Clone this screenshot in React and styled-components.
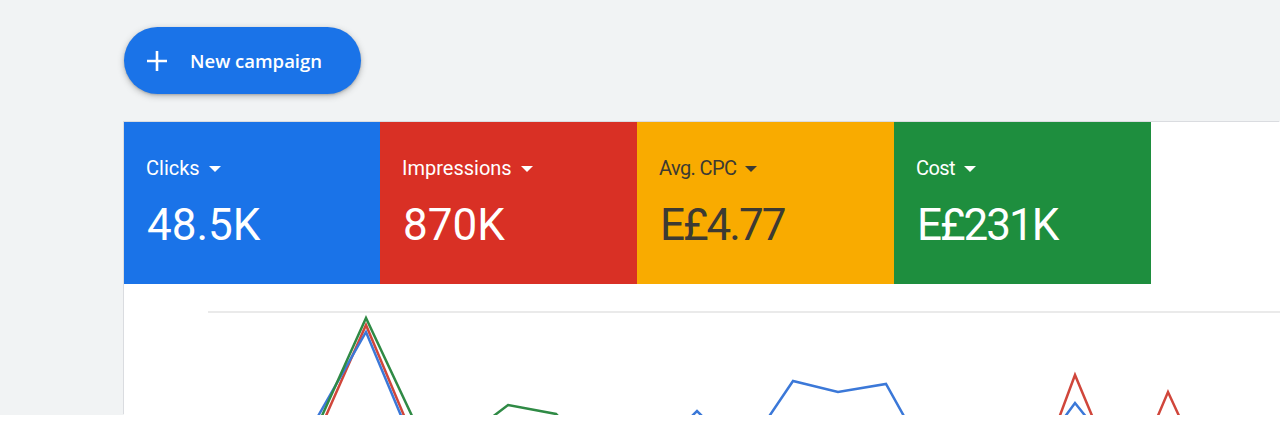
import React from "react";
import styled, { createGlobalStyle } from "styled-components";

const GlobalStyle = createGlobalStyle`
    body {
        margin: 0;
        background: #ffffff;
        font-family: Roboto, "Liberation Sans", Arial, sans-serif;
    }
`;

const Page = styled.div`
    height: 415px;
    overflow: hidden;
    background: #f1f3f4;
    padding: 27px 0 0 124px;
    box-sizing: border-box;
`;

const CampaignButton = styled.button`
    display: flex;
    align-items: center;
    gap: 22px;
    width: 237px;
    height: 67px;
    padding: 0 0 0 22px;
    border: none;
    border-radius: 34px;
    background: #1a73e8;
    color: #ffffff;
    font-family: "Open Sans", Roboto, sans-serif;
    font-size: 18.5px;
    font-weight: 600;
    box-shadow: 0 2px 6px rgba(60, 64, 67, 0.35), 0 1px 2px rgba(60, 64, 67, 0.2);
    cursor: pointer;
`;

const Panel = styled.div`
    margin-top: 28px;
    background: #ffffff;
    box-shadow: -1px -1px 0 #dadce0;
`;

const Tiles = styled.div`
    display: flex;
    height: 162px;
`;

const Tile = styled.div`
    width: ${(p) => p.$w}px;
    background: ${(p) => p.$bg};
    color: ${(p) => p.$fg};
    padding: 34px 0 0 22px;
    box-sizing: border-box;
`;

const Label = styled.div`
    display: flex;
    align-items: center;
    gap: 9px;
    font-size: 20px;
    letter-spacing: ${(p) => (p.$tight ? "-0.6px" : "0")};
    height: 24px;
`;

const Caret = styled.span`
    width: 0;
    height: 0;
    border-left: 6px solid transparent;
    border-right: 6px solid transparent;
    border-top: 6px solid currentColor;
    margin-top: 2px;
`;

const Value = styled.div`
    margin-top: 19px;
    padding-left: 1px;
    font-size: 44px;
    line-height: 52px;
    letter-spacing: ${(p) => (p.$tight ? "-2px" : "0")};
`;

const Chart = styled.svg`
    display: block;
`;

const metrics = [
    { label: "Clicks", value: "48.5K", bg: "#1a73e8", fg: "#ffffff", w: 256 },
    { label: "Impressions", value: "870K", bg: "#d93025", fg: "#ffffff", w: 257 },
    { label: "Avg. CPC", value: "E£4.77", bg: "#f9ab00", fg: "#3c3a33", w: 257, tight: true },
    { label: "Cost", value: "E£231K", bg: "#1e8e3e", fg: "#ffffff", w: 257, tight: true },
];

const blue = "#3b78d8";
const red = "#d0463b";
const green = "#2f8a45";

export default function App() {
    return (
        <>
            <GlobalStyle />
            <Page>
                <CampaignButton>
                    <svg width="22" height="22" viewBox="0 0 22 22">
                        <path d="M11 1v20M1 11h20" stroke="#fff" strokeWidth="2.6" />
                    </svg>
                    New campaign
                </CampaignButton>
                <Panel>
                    <Tiles>
                        {metrics.map((m) => (
                            <Tile key={m.label} $bg={m.bg} $fg={m.fg} $w={m.w}>
                                <Label $tight={m.tight}>
                                    {m.label}
                                    <Caret />
                                </Label>
                                <Value $tight={m.tight}>{m.value}</Value>
                            </Tile>
                        ))}
                    </Tiles>
                    <Chart width="1156" height="131" viewBox="124 284 1156 131">
                        <line x1="208" y1="312" x2="1280" y2="312" stroke="#e3e3e3" strokeWidth="1.5" />
                        <g fill="none" strokeWidth="2.5" strokeLinejoin="miter">
                            <polyline points="325,418 366,325 405,418" stroke={red} />
                            <polyline points="317,418 366,332 402,418" stroke={blue} />
                            <polyline points="321,418 366,318 413,418" stroke={green} />
                            <polyline points="491,418 508,405 556,414 560,418" stroke={green} />
                            <polyline points="690,418 697,411 704,418" stroke={blue} />
                            <polyline points="768,418 793,381 838,392 886,384 905,418" stroke={blue} />
                            <polyline points="1059,418 1075,375 1093,418" stroke={red} />
                            <polyline points="1064,418 1075,403 1087,418" stroke={blue} />
                            <polyline points="1157,418 1168,392 1180,418" stroke={red} />
                        </g>
                    </Chart>
                </Panel>
            </Page>
        </>
    );
}
